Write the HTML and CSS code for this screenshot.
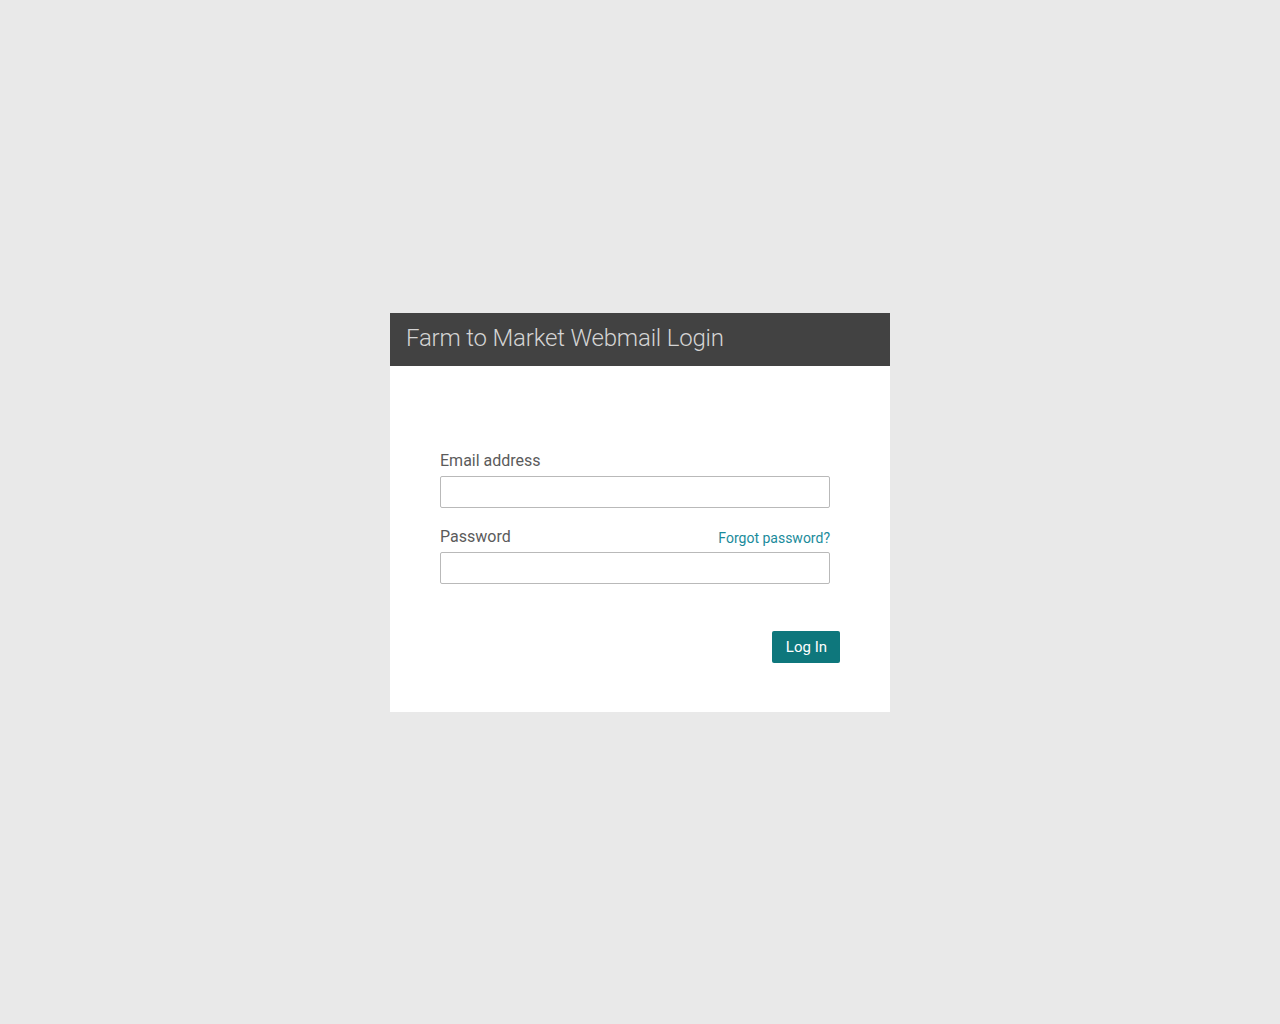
FILE: index.html
```html
<!DOCTYPE html>
<html lang="en">
<head>
    <meta charset="UTF-8">
    <title>Farm to Market Webmail Login</title>
    <link rel="stylesheet" href="styles.css">
</head>
<body>
    <div class="login-box">
        <div class="login-header">Farm to Market Webmail Login</div>
        <form class="login-form">
            <div class="field">
                <div class="label-row">
                    <label for="email">Email address</label>
                </div>
                <input type="text" id="email" class="text-input">
            </div>
            <div class="field">
                <div class="label-row">
                    <label for="password">Password</label>
                    <a href="#" class="forgot">Forgot password?</a>
                </div>
                <input type="password" id="password" class="text-input">
            </div>
            <div class="actions">
                <button type="button" class="button">Log In</button>
            </div>
        </form>
    </div>
</body>
</html>
```

FILE: styles.css
```css
html, body {
    margin: 0;
    padding: 0;
}
body {
    font-family: Roboto, 'Liberation Sans', sans-serif;
    background: #e9e9e9;
    min-height: 100vh;
    display: flex;
    align-items: center;
    justify-content: center;
}
.login-box {
    width: 500px;
    background: white;
    margin-top: 1px;
}
.login-header {
    background: #424242;
    color: #d4d4d4;
    font-weight: 300;
    font-size: 24px;
    letter-spacing: -0.18px;
    height: 53px;
    line-height: 51px;
    padding: 0 16px;
}
.login-form {
    padding: 85px 50px 49px 50px;
}
.field {
    width: 390px;
    margin-bottom: 19px;
}
.label-row {
    display: flex;
    justify-content: space-between;
    align-items: flex-end;
    margin-bottom: 6px;
}
.label-row label {
    font-size: 16px;
    line-height: 19px;
    color: #5b5b5b;
}
.forgot {
    font-size: 14px;
    line-height: 15px;
    color: #1a8b9b;
    text-decoration: none;
}
.text-input {
    display: block;
    box-sizing: border-box;
    width: 390px;
    height: 32px;
    border: 1px solid #b9b9b9;
    border-radius: 2px;
    margin: 0;
    padding: 4px 8px;
    font-size: 14px;
}
.actions {
    display: flex;
    justify-content: flex-end;
    padding-top: 28px;
}
.button {
    background: #0e777c;
    color: white;
    font-family: Roboto, sans-serif;
    font-size: 15px;
    height: 32px;
    padding: 0 13px 0 14px;
    border: none;
    border-radius: 2px;
    cursor: pointer;
}
```
